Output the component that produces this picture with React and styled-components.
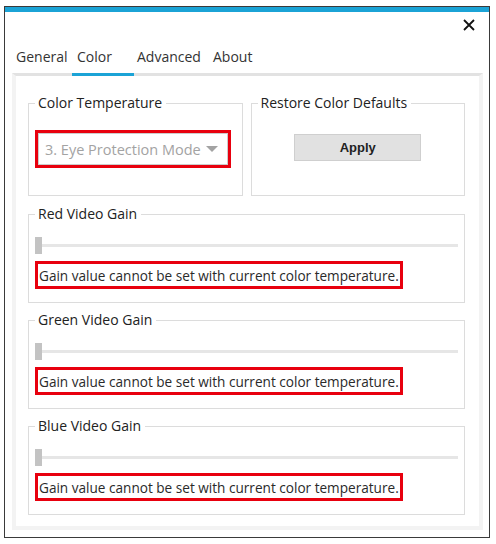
import styled, { createGlobalStyle } from "styled-components";

const GlobalStyle = createGlobalStyle`
  html, body {
    margin: 0;
    padding: 0;
    background: #fff;
  }
  body {
    font-family: "Open Sans", "Noto Sans", Arial, sans-serif;
    color: #222;
  }
  * { box-sizing: border-box; }
`;

const Window = styled.div`
  margin: 6px 0 0 4px;
  width: 486px;
  height: 532px;
  border: 1px solid #3a3a3a;
  background: #fff;
  display: flex;
  flex-direction: column;
`;

const Accent = styled.div`
  height: 5px;
  background: #1ba3d6;
`;

const Header = styled.div`
  height: 28px;
  display: flex;
  justify-content: flex-end;
  align-items: center;
  padding-right: 12px;
  padding-bottom: 2px;
`;

const CloseButton = styled.button`
  width: 16px;
  height: 16px;
  padding: 0;
  border: 0;
  background: none;
  display: flex;
  align-items: center;
  justify-content: center;
`;

const TabBar = styled.div`
  display: flex;
  height: 33px;
  padding-left: 7px;
  align-items: stretch;
`;

const Tab = styled.div`
  width: ${(p) => p.w}px;
  padding-left: ${(p) => p.pad}px;
  font-size: 14px;
  color: #333;
  display: flex;
  align-items: center;
  border-bottom: 3px solid ${(p) => (p.active ? "#1ba3d6" : "transparent")};
  margin-bottom: -3px;
  position: relative;
  z-index: 1;
`;

const Panel = styled.div`
  margin: 0 6px 7px 7px;
  flex: 1;
  border-top: 3px solid #e2e2e2;
  border-left: 4px solid #f3f3f3;
  border-right: 4px solid #f3f3f3;
  border-bottom: 4px solid #f3f3f3;
  padding: 17px 14px 0 12px;
  display: flex;
  flex-direction: column;
  gap: 7px;
`;

const TopRow = styled.div`
  display: flex;
  gap: 8px;
  margin-bottom: 1px;
`;

const Group = styled.fieldset`
  margin: 0;
  width: ${(p) => (p.w ? `${p.w}px` : "auto")};
  height: ${(p) => p.h}px;
  border: 1px solid #dcdcdc;
  padding: 6px 6px 0 6px;
  display: flex;
  flex-direction: column;
  align-items: ${(p) => (p.center ? "center" : "stretch")};
`;

const Legend = styled.legend`
  margin-left: 0;
  padding: 0 4px 0 3px;
  font-size: 14px;
  line-height: 20px;
  color: #222;
`;

const Highlight = styled.div`
  margin-top: ${(p) => p.top}px;
  border: 3px solid #e8000e;
  align-self: flex-start;
`;

const Combo = styled.div`
  width: 190px;
  height: 32px;
  border: 1px solid #cccccc;
  background: #fff;
  display: flex;
  align-items: center;
  padding-left: 6px;
  font-size: 14.5px;
  color: #a3a3a3;
  white-space: nowrap;
  overflow: hidden;
`;

const ComboText = styled.span`
  flex: 1;
`;

const Arrow = styled.span`
  width: 0;
  height: 0;
  border-left: 6px solid transparent;
  border-right: 6px solid transparent;
  border-top: 6px solid #a3a3a3;
  margin-right: 9px;
`;

const ApplyButton = styled.button`
  margin-top: 15px;
  width: 127px;
  height: 27px;
  background: #e1e1e1;
  border: 1px solid #cfcfcf;
  font-family: "Liberation Sans", Arial, sans-serif;
  font-weight: bold;
  font-size: 13px;
  color: #222;
`;

const Slider = styled.div`
  margin-top: 7px;
  height: 17px;
  display: flex;
  align-items: center;
`;

const Thumb = styled.div`
  width: 7px;
  height: 17px;
  background: #c3c3c3;
`;

const Track = styled.div`
  flex: 1;
  height: 3px;
  background: #e6e6e6;
`;

const Message = styled.div`
  height: 22px;
  padding: 0 1px 0 1px;
  display: flex;
  align-items: center;
  font-size: 13.6px;
  color: #2a2a2a;
  white-space: nowrap;
`;

const GainGroup = ({ title }) => (
  <Group h={99}>
    <Legend>{title}</Legend>
    <Slider>
      <Thumb />
      <Track />
    </Slider>
    <Highlight top={7}>
      <Message>Gain value cannot be set with current color temperature.</Message>
    </Highlight>
  </Group>
);

const App = () => {
  return (
    <>
      <GlobalStyle />
      <Window>
        <Accent />
        <Header>
          <CloseButton aria-label="Close">
            <svg width="12" height="12" viewBox="0 0 12 12">
              <path d="M1 1 L11 11 M11 1 L1 11" stroke="#111" strokeWidth="1.8" />
            </svg>
          </CloseButton>
        </Header>
        <TabBar>
          <Tab w={60} pad={4}>General</Tab>
          <Tab w={62} pad={5} active>Color</Tab>
          <Tab w={75} pad={3}>Advanced</Tab>
          <Tab w={50} pad={4}>About</Tab>
        </TabBar>
        <Panel>
          <TopRow>
            <Group w={215} h={103}>
              <Legend>Color Temperature</Legend>
              <Highlight top={11}>
                <Combo>
                  <ComboText>3. Eye Protection Mode</ComboText>
                  <Arrow />
                </Combo>
              </Highlight>
            </Group>
            <Group w={215} h={103} center>
              <Legend>Restore Color Defaults</Legend>
              <ApplyButton>Apply</ApplyButton>
            </Group>
          </TopRow>
          <GainGroup title="Red Video Gain" />
          <GainGroup title="Green Video Gain" />
          <GainGroup title="Blue Video Gain" />
        </Panel>
      </Window>
    </>
  );
};

export default App;
